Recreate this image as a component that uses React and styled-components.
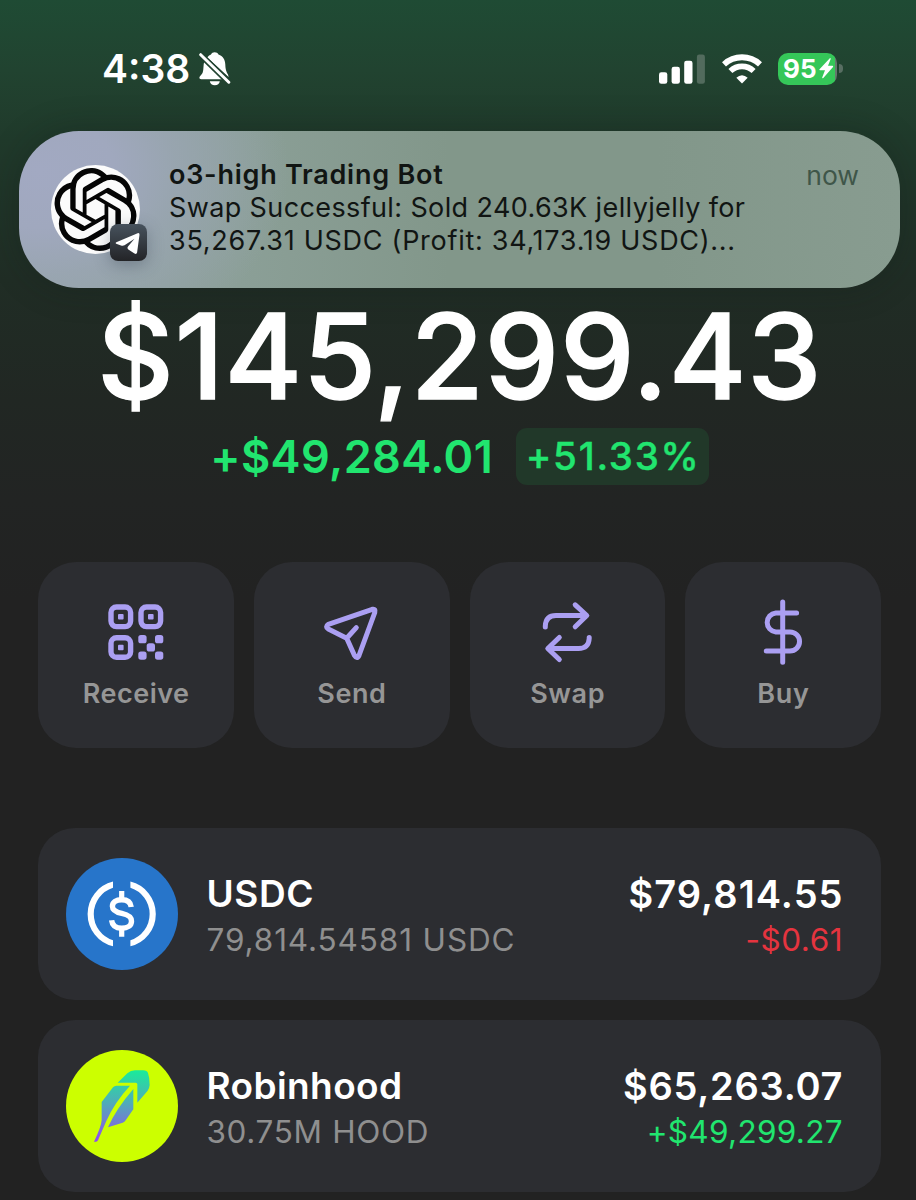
import React from "react";
import styled, { createGlobalStyle } from "styled-components";
import { SiOpenai } from "react-icons/si";

const GlobalStyle = createGlobalStyle`
  *, *::before, *::after { box-sizing: border-box; }
  html, body { margin: 0; padding: 0; }
  body {
    background: #222222;
    font-family: Inter, "Liberation Sans", sans-serif;
    -webkit-font-smoothing: antialiased;
  }
`;

const Screen = styled.div`
  width: 916px;
  height: 1200px;
  overflow: hidden;
  background: linear-gradient(
    180deg,
    #1f4b34 0px,
    #214330 70px,
    #203a2b 140px,
    #202d25 280px,
    #212723 400px,
    #222423 500px,
    #222222 600px
  );
  color: #fff;
`;

const Text = styled.span`
  display: block;
  white-space: nowrap;
  font-size: ${(p) => p.$size}px;
  font-weight: ${(p) => p.$weight || 400};
  line-height: ${(p) => p.$line}px;
  letter-spacing: ${(p) => p.$track || 0}px;
  margin-right: ${(p) => -(p.$track || 0)}px;
  color: ${(p) => p.$color || "#fff"};
  -webkit-text-stroke: ${(p) => p.$thicken || 0}px currentColor;
`;

const StatusBar = styled.header`
  height: 131px;
  padding: 6px 73px 0 102px;
  display: flex;
  align-items: center;
  justify-content: space-between;
`;

const StatusGroup = styled.div`
  display: flex;
  align-items: center;
  gap: ${(p) => p.$gap}px;
`;

const Battery = styled.div`
  display: flex;
  align-items: center;
  gap: 2px;
`;

const BatteryBody = styled.div`
  width: 59px;
  height: 32px;
  border-radius: 10px;
  padding-left: 5px;
  display: flex;
  align-items: center;
  gap: 2px;
  background: linear-gradient(90deg, #35c759 57px, #66786d 57px);
`;

const BatteryTip = styled.div`
  width: 4px;
  height: 9px;
  border-radius: 0 4px 4px 0;
  background: #586e62;
`;

const Notification = styled.section`
  margin: 0 16px 0 19px;
  height: 157px;
  padding: 27px 41px 0 32px;
  display: flex;
  align-items: flex-start;
  border-radius: 60px;
  background: radial-gradient(
      ellipse 250px 190px at 20px 40px,
      #a2a9c2 0%,
      #a0a8be 30%,
      rgba(155, 166, 181, 0.75) 55%,
      rgba(145, 163, 160, 0) 100%
    ),
    linear-gradient(90deg, #94a3a6 0px, #8b9f97 220px, #82978a 430px, #82978a 640px, #889c90 881px);
  box-shadow: 0 0 34px rgba(18, 28, 22, 0.3);
`;

const Avatar = styled.div`
  position: relative;
  flex: none;
  width: 89px;
  height: 89px;
  margin: 7px 29px 0 0;
  border-radius: 50%;
  background: #fbfbfb;
  display: flex;
  align-items: center;
  justify-content: center;
  color: #050505;
`;

const AppBadge = styled.div`
  position: absolute;
  left: 59px;
  top: 59px;
  width: 37px;
  height: 37px;
  border-radius: 8px;
  background: linear-gradient(180deg, #47525d, #232427);
  box-shadow: 0 4px 16px rgba(50, 60, 75, 0.35);
  display: flex;
`;

const NoticeText = styled.div`
  flex: 1;
`;

const NoticeTime = styled.div`
  padding-top: 1px;
`;

const Balance = styled.section`
  padding: 0 35px 0 38px;
  display: flex;
  flex-direction: column;
  align-items: center;
`;

const ChangeRow = styled.div`
  margin-top: 4px;
  display: flex;
  align-items: center;
  gap: 23px;
`;

const PercentBadge = styled.div`
  width: 193px;
  height: 57px;
  border-radius: 11px;
  background: #213829;
  display: flex;
  align-items: center;
  justify-content: center;
`;

const Actions = styled.nav`
  margin: 77px 35px 0 38px;
  display: grid;
  grid-template-columns: repeat(4, 1fr);
  gap: 20px;
`;

const ActionCard = styled.div`
  height: 186px;
  padding-top: 34px;
  border-radius: 38px;
  background: #2c2d31;
  display: flex;
  flex-direction: column;
  align-items: center;
  gap: 9px;
`;

const TokenList = styled.main`
  margin: 80px 35px 0 38px;
  display: flex;
  flex-direction: column;
  gap: 20px;
`;

const TokenCard = styled.article`
  height: 172px;
  padding: 0 38.5px 0 28px;
  border-radius: 37px;
  background: #2c2d31;
  display: flex;
  align-items: center;
`;

const TokenText = styled.div`
  padding-top: 6px;
  margin-left: ${(p) => (p.$end ? "auto" : "28.5px")};
  display: flex;
  flex-direction: column;
  align-items: ${(p) => (p.$end ? "flex-end" : "flex-start")};
`;

const MutedBell = () => (
  <svg width="32" height="34" viewBox="0 0 32 34" fill="#fff">
    <path d="M8.2 5.6C9.4 4 10.8 3 12 2.6C12.7 1 14 .2 15.700 .2S18.800 1 19.500 2.600C24 4.300 26 7.500 26.300 12.500C26.500 17.500 27.200 19.500 29 22.500L29.600 25Z" />
    <path d="M5.300 9.300L23.800 27.300H2.200C.5 27.300-.1 26 .8 24.500C1.500 23.400 3 22.300 3.700 20.500C4.800 17.800 4.200 12.500 5.300 9.300Z" />
    <path d="M10.800 29.300H20.800C20.400 31.800 18.500 33.300 15.800 33.300S11.200 31.800 10.800 29.300Z" />
    <path d="M1.400 2.600L30.300 30.900" stroke="#214330" strokeWidth="6" />
    <path d="M1.700 2.700L29.800 30.200" stroke="#fff" strokeWidth="3" strokeLinecap="round" />
  </svg>
);

const Signal = () => (
  <svg width="46" height="30" viewBox="0 0 46 30" fill="#fff">
    <rect x="0" y="18.200" width="8.300" height="11.500" rx="2.300" />
    <rect x="12.600" y="12.800" width="8.300" height="16.900" rx="2.300" />
    <rect x="25.200" y="6.800" width="8.300" height="22.900" rx="2.300" />
    <rect x="37.900" y=".4" width="8" height="29.300" rx="2.300" fill="#526b5d" />
  </svg>
);

const Wifi = () => (
  <svg width="40" height="30" viewBox="0 0 40 30" fill="none" stroke="#fff" strokeWidth="5.800">
    <path d="M2 10.300A26.500 26.500 0 0 1 38 10.300" />
    <path d="M8.400 17A17 17 0 0 1 31.600 17" />
    <path d="M20 29.600L14.300 23.800Q20 18.600 25.700 23.800Z" fill="#fff" stroke="none" />
  </svg>
);

const Bolt = () => (
  <svg width="15" height="21" viewBox="0 0 15 21" fill="#fff">
    <path d="M10.800 .2L.5 11.300Q0 12.300 1 12.300H6L3.200 19.600Q3.300 20.800 4.300 20L14 8.900Q14.500 7.900 13.500 7.800H9L11.700 .9Q11.600 -.4 10.800 .2Z" />
  </svg>
);

const PaperPlane = () => (
  <svg width="37" height="37" viewBox="0 0 37 37" fill="#fff">
    <path d="M6.300 18.200L27.600 9.200Q29.600 8.500 29.500 10.700L27.100 28.600Q26.500 30.700 24.500 29.500L18.300 25.500Q16.600 24.200 18 22.600L24.500 14.800L14.500 21.300Q12.700 22.200 11 21.400L6.200 19.700Q4.800 18.900 6.300 18.200Z" />
  </svg>
);

const ActionSvg = styled.svg.attrs({ width: 72, height: 72, viewBox: "0 0 72 72" })`
  flex: none;
  fill: none;
  stroke: #ab9ff2;
  stroke-width: 5;
  stroke-linecap: round;
  stroke-linejoin: round;
`;

const finderSquares = [
  [8.3, 8.3],
  [38.3, 8.3],
  [8.3, 39],
];
const qrDots = [
  [38.3, 39],
  [55, 39],
  [46.7, 47.2],
  [38.3, 55.4],
  [55, 55.4],
];

const QrIcon = () => (
  <ActionSvg>
    {finderSquares.map(([x, y]) => (
      <g key={`${x}-${y}`}>
        <rect x={x + 2.7} y={y + 2.7} width="19.600" height="19.600" rx="5.500" strokeWidth="5.400" />
        <rect x={x + 9.7} y={y + 9.7} width="5.600" height="5.600" rx="1" fill="#ab9ff2" stroke="none" />
      </g>
    ))}
    {qrDots.map(([x, y]) => (
      <rect key={`${x}-${y}`} x={x} y={y} width="8.300" height="8.300" rx="2.600" fill="#ab9ff2" stroke="none" />
    ))}
  </ActionSvg>
);

const SendIcon = () => (
  <ActionSvg>
    <path d="M30.700 42.200L12.300 33Q8.800 30.600 12.300 28.400L56.300 13.300Q60 12.500 58.800 16.500L43 59.500Q40.900 63.500 38.500 59.500L30.700 42.200L40.300 31.600" />
  </ActionSvg>
);

const SwapIcon = () => (
  <ActionSvg>
    <path d="M14.300 31V30Q14.800 19.500 25 19.500H55.500M44.200 8.800L55.800 19.500L44.200 30.800" />
    <path d="M58.200 41.500V42.500Q57.700 52.500 47.500 52.500H17M28.300 41.500L16.800 52.500L28.300 63.500" />
  </ActionSvg>
);

const DollarIcon = () => (
  <ActionSvg>
    <path d="M35.700 5.900V66.300M49.600 16.900H28.800A9.600 9.600 0 0 0 28.800 36H43A9.500 9.500 0 0 1 43 55.100H19.300" />
  </ActionSvg>
);

const UsdcLogo = () => (
  <svg width="112" height="112" viewBox="0 0 112 112" fill="none" stroke="#fff">
    <circle cx="56" cy="56" r="56" fill="#2775ca" stroke="none" />
    <path
      d="M47 23.600V29.700A27.600 27.600 0 0 0 47 82.300V88.300A33.300 33.300 0 0 1 47 23.600ZM64.400 23.600V29.700A27.600 27.600 0 0 1 64.400 82.300V88.300A33.300 33.300 0 0 0 64.400 23.600Z"
      fill="#fff"
      stroke="none"
    />
    <path
      d="M65.200 49C64.700 44 61 41.700 55.700 41.700C50 41.700 46.400 44.200 46.400 48.200C46.400 52.400 50 54.100 55.800 55.400C62 56.800 65.500 58.500 65.500 63.200C65.500 67.700 61.500 70.200 55.700 70.200C49.800 70.200 46.200 67.500 45.600 62.300"
      strokeWidth="5.400"
    />
    <path d="M55.700 33V42M55.700 70V78.800" strokeWidth="5.200" />
  </svg>
);

const FeatherLogo = () => (
  <svg width="112" height="112" viewBox="0 0 336 336">
    <defs>
      <linearGradient id="feather" x1="0" y1="61" x2="0" y2="275" gradientUnits="userSpaceOnUse">
        <stop offset="0" stopColor="#1aeb9a" />
        <stop offset=".45" stopColor="#4fadb8" />
        <stop offset=".75" stopColor="#7579d4" />
        <stop offset="1" stopColor="#9247f5" />
      </linearGradient>
    </defs>
    <circle cx="168" cy="168" r="168" fill="#ccff00" />
    <g fill="url(#feather)">
      <path d="M155 98L184 70Q194 61 207 61H232Q243 61 246 69Q251 83 251 105Q250 115 245 122L214 158V103Q214 98 209 98Z" />
      <path d="M107 156L141 112Q145 107 151 107H192Q145 158 121 213L96 271Q94 275 90 275H84Q106 229 107 210Z" />
      <path d="M202 117V178L179 211Q176 216 170 218L126 232Q150 177 202 117Z" />
    </g>
  </svg>
);

const actions = [
  { label: "Receive", Icon: QrIcon, track: 0.5 },
  { label: "Send", Icon: SendIcon, track: 0.6 },
  { label: "Swap", Icon: SwapIcon, track: 0.6 },
  { label: "Buy", Icon: DollarIcon, track: 0.7 },
];

const tokens = [
  {
    name: "USDC",
    Logo: UsdcLogo,
    amount: "79,814.54581 USDC",
    value: "$79,814.55",
    change: "-$0.61",
    color: "#e5343f",
    track: [0.6, 0.88, 1.05, 0.5],
  },
  {
    name: "Robinhood",
    Logo: FeatherLogo,
    amount: "30.75M HOOD",
    value: "$65,263.07",
    change: "+$49,299.27",
    color: "#21e56f",
    track: [0.4, 0.65, 0.75, 0.3],
  },
];

export default function App() {
  return (
    <Screen>
      <GlobalStyle />
      <StatusBar>
        <StatusGroup $gap={9}>
          <Text $size={39} $weight={600} $line={48}>4:38</Text>
          <MutedBell />
        </StatusGroup>
        <StatusGroup $gap={16.5}>
          <Signal />
          <Wifi />
          <Battery>
            <BatteryBody>
              <Text $size={26} $weight={700} $line={32}>95</Text>
              <Bolt />
            </BatteryBody>
            <BatteryTip />
          </Battery>
        </StatusGroup>
      </StatusBar>

      <Notification>
        <Avatar>
          <SiOpenai size={83} />
          <AppBadge>
            <PaperPlane />
          </AppBadge>
        </Avatar>
        <NoticeText>
          <Text $size={27} $weight={600} $line={33} $color="#111513" $track={0.75}>o3-high Trading Bot</Text>
          <Text $size={27} $line={33} $color="#111513" $track={0.38}>Swap Successful: Sold 240.63K jellyjelly for</Text>
          <Text $size={27} $line={33} $color="#111513" $track={0.72}>35,267.31 USDC (Profit: 34,173.19 USDC)...</Text>
        </NoticeText>
        <NoticeTime>
          <Text $size={26.500} $line={33} $color="#3f5649">now</Text>
        </NoticeTime>
      </Notification>

      <Balance>
        <Text $size={118.500} $weight={500} $line={136} $track={0.75} $thicken={1.4}>$145,299.43</Text>
        <ChangeRow>
          <Text $size={45} $weight={600} $line={57} $track={0.4} $color="#21e56f">+$49,284.01</Text>
          <PercentBadge>
            <Text $size={38.500} $weight={500} $line={57} $track={1.75} $thicken={0.4} $color="#21e56f">+51.33%</Text>
          </PercentBadge>
        </ChangeRow>
      </Balance>

      <Actions>
        {actions.map(({ label, Icon, track }) => (
          <ActionCard key={label}>
            <Icon />
            <Text $size={27} $weight={600} $line={33} $color="#969696" $track={track}>{label}</Text>
          </ActionCard>
        ))}
      </Actions>

      <TokenList>
        {tokens.map(({ name, Logo, amount, value, change, color, track }) => (
          <TokenCard key={name}>
            <Logo />
            <TokenText>
              <Text $size={37} $weight={600} $line={46} $track={track[0]}>{name}</Text>
              <Text $size={31.500} $line={46} $color="#8f8f8f" $track={track[1]}>{amount}</Text>
            </TokenText>
            <TokenText $end>
              <Text $size={38} $weight={600} $line={46} $track={track[2]}>{value}</Text>
              <Text $size={31.500} $line={46} $color={color} $track={track[3]}>{change}</Text>
            </TokenText>
          </TokenCard>
        ))}
      </TokenList>
    </Screen>
  );
}
